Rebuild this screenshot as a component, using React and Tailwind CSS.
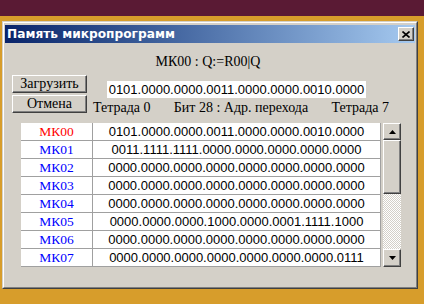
import React from 'react';

const rows = [
  ['МК00', '0101.0000.0000.0011.0000.0000.0010.0000', true],
  ['МК01', '0011.1111.1111.0000.0000.0000.0000.0000'],
  ['МК02', '0000.0000.0000.0000.0000.0000.0000.0000'],
  ['МК03', '0000.0000.0000.0000.0000.0000.0000.0000'],
  ['МК04', '0000.0000.0000.0000.0000.0000.0000.0000'],
  ['МК05', '0000.0000.0000.1000.0000.0001.1111.1000'],
  ['МК06', '0000.0000.0000.0000.0000.0000.0000.0000'],
  ['МК07', '0000.0000.0000.0000.0000.0000.0000.0111'],
];

const serif = "font-['Liberation_Serif',serif]";
const sans = "font-['Liberation_Sans',sans-serif]";
// классическая выпуклая рамка win2000
const raised = 'border border-t-white border-l-white border-r-[#404040] border-b-[#404040] shadow-[inset_-1px_-1px_#808080]';

const Btn = ({ children }) => (
  <div className={`${raised} ${serif} w-[75px] h-[18px] bg-[#d4d0c8] flex items-center justify-center text-[14px] leading-none text-black`}>
    {children}
  </div>
);

const Arrow = ({ down }) => (
  <svg width="7" height="4" viewBox="0 0 7 4">
    <path d={down ? 'M0 0H7L3.5 4Z' : 'M0 4H7L3.5 0Z'} fill="#000" />
  </svg>
);

export default function App() {
  return (
    <div className="w-[424px] h-[304px] bg-[#d79d2b] flex flex-col overflow-hidden">
      <div className="h-[16px] bg-[#5a1a34] shrink-0" />
      <div className="pl-[2px] pt-[5px]">
        <div className="w-[416px] h-[268px] bg-[#d4d0c8] border border-t-[#d4d0c8] border-l-[#d4d0c8] border-r-[#404040] border-b-[#404040]">
          <div className="h-full border border-t-white border-l-white border-r-[#808080] border-b-[#808080] px-[1px] pt-[2px] flex flex-col">
            {/* заголовок окна */}
            <div className="h-[18px] bg-gradient-to-r from-[#0a246a] to-[#a6caf0] flex items-center justify-between pl-[2px] pr-[1px]">
              <span className="font-['DejaVu_Sans',sans-serif] font-bold text-[12.2px] text-white leading-none">Память микропрограмм</span>
              <div className={`${raised} w-[16px] h-[14px] bg-[#d4d0c8] flex items-center justify-center`}>
                <svg width="8" height="7" viewBox="0 0 8 7">
                  <path d="M0.5 0.5L7.5 6.5M7.5 0.5L0.5 6.5" stroke="#000" strokeWidth="1.6" />
                </svg>
              </div>
            </div>

            <div className={`${serif} mt-[11px] h-[16px] text-center text-[14px] leading-[16px] text-black pr-[4px]`}>
              МК00 : Q:=R00|Q
            </div>

            <div className="flex mt-[5px] pl-[7px]">
              <div className="flex flex-col gap-[2px]">
                <Btn>Загрузить</Btn>
                <Btn>Отмена</Btn>
              </div>
              <div className="ml-[6px] flex flex-col">
                <div className={`${sans} ml-[14px] mt-[6px] w-[259px] h-[17px] bg-white flex items-center justify-center text-[13px] leading-none text-black`}>
                  0101.0000.0000.0011.0000.0000.0010.0000
                </div>
                <div className={`${serif} mt-[2px] w-[296px] h-[16px] flex justify-between text-[14px] leading-[16px] text-black`}>
                  <span>Тетрада 0</span>
                  <span>Бит 28 : Адр. перехода</span>
                  <span>Тетрада 7</span>
                </div>
              </div>
            </div>

            <div className="flex mt-[7px] pl-[16px] gap-[2px]">
              <div className="flex flex-col bg-white w-[360px]">
                {rows.map(([mk, bits, active]) => (
                  <div key={mk} className="flex h-[18px] border-b border-[#a0a0a0]">
                    <div className={`${serif} w-[72px] border-r border-[#a0a0a0] flex items-center justify-center text-[13.5px] leading-none ${active ? 'text-[#ff0000]' : 'text-[#0000ff]'}`}>
                      {mk}
                    </div>
                    <div className={`${sans} w-[288px] border-r border-[#a0a0a0] flex items-center justify-center text-[13px] leading-none text-black`}>
                      {bits}
                    </div>
                  </div>
                ))}
              </div>
              <div className="w-[18px] flex flex-col">
                <div className={`${raised} h-[17px] bg-[#d4d0c8] flex items-center justify-center`}><Arrow /></div>
                <div className={`${raised} h-[54px] bg-[#d4d0c8]`} />
                <div className="flex-1 bg-[repeating-conic-gradient(#d4d0c8_0%_25%,#ffffff_0%_50%)] bg-size-[2px_2px]" />
                <div className={`${raised} h-[18px] bg-[#d4d0c8] flex items-center justify-center`}><Arrow down /></div>
              </div>
            </div>
          </div>
        </div>
      </div>
    </div>
  );
}
